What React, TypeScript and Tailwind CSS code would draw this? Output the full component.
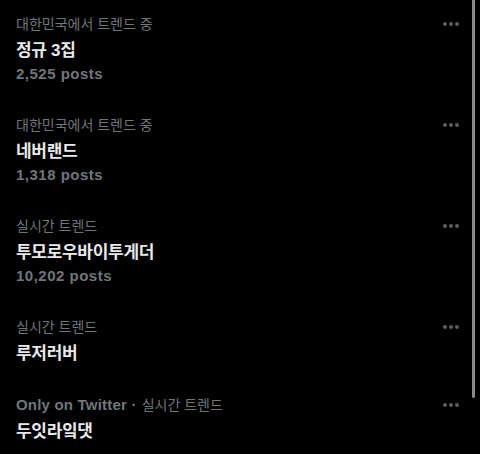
const trends = [
  { context: '대한민국에서 트렌드 중', title: '정규 3집', posts: '2,525 posts' },
  { context: '대한민국에서 트렌드 중', title: '네버랜드', posts: '1,318 posts' },
  { context: '실시간 트렌드', title: '투모로우바이투게더', posts: '10,202 posts' },
  { context: '실시간 트렌드', title: '루저러버' },
  { context: '실시간 트렌드', title: '두잇라잌댓', only: true },
];

const font = "font-['Liberation_Sans','Noto_Sans_CJK_KR',sans-serif]";

function MoreDots() {
  return (
    <svg width="18" height="4" viewBox="0 0 18 4" className="shrink-0">
      <circle cx="2" cy="2" r="2" fill="#5b5e62" />
      <circle cx="8" cy="2" r="2" fill="#5b5e62" />
      <circle cx="14" cy="2" r="2" fill="#5b5e62" />
    </svg>
  );
}

function TrendRow({ trend }: any) {
  return (
    <div className="pl-4 pr-[19px] pt-[14px] pb-[15px]">
      <div className="flex h-5 items-center justify-between">
        <p className="text-[14px] leading-5 text-[#71767b]">
          {trend.only && (
            <span className="mr-[5px] text-[15px] font-bold tracking-[0.2px]">
              Only on Twitter ·
            </span>
          )}
          {trend.context}
        </p>
        <MoreDots />
      </div>

      <p className="mt-[5px] text-[17px] font-bold leading-6 tracking-[-0.3px] text-[#e7e9ea]">
        {trend.title}
      </p>

      {trend.posts && (
        <p className="-mt-px text-[15px] font-bold leading-6 tracking-[0.5px] text-[#71767b]">
          {trend.posts}
        </p>
      )}
    </div>
  );
}

export default function App() {
  return (
    <div className={`relative h-[454px] w-[480px] overflow-hidden bg-black ${font}`}>
      {trends.map((t, i) => (
        <TrendRow key={i} trend={t} />
      ))}

      {/* scroll indicator */}
      <div className="absolute right-[5px] top-0 h-[398px] w-[3px] rounded-b-full bg-[#8a8a8a]" />
    </div>
  );
}
